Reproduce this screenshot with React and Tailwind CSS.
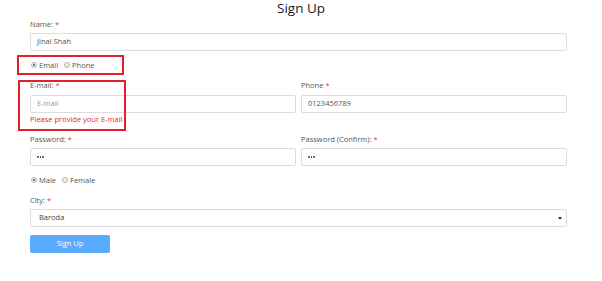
import React from 'react';

const font = { fontFamily: '"Open Sans", "Noto Sans", sans-serif' };

const Req = () => <span className="text-[#e53935] ml-[2px]">*</span>;

const Label = ({ children, required = true }) => (
  <div className="h-[10px] leading-[10px] text-[7.5px] text-[#555]">
    {children}
    {required && <Req />}
  </div>
);

const Input = ({ value, placeholder, className = '' }) => (
  <div
    className={`h-[18px] border border-[#dcdcdc] rounded-[2px] bg-white flex items-center px-[6px] text-[7.5px] ${className}`}
  >
    {value ? (
      <span className="text-[#555]">{value}</span>
    ) : (
      <span className="text-[#999]">{placeholder}</span>
    )}
  </div>
);

const Dots = () => (
  <div className="h-[18px] border border-[#dcdcdc] rounded-[2px] bg-white flex items-center px-[6px] gap-[1px]">
    <span className="w-[1.5px] h-[1.5px] rounded-full bg-[#444]" />
    <span className="w-[1.5px] h-[1.5px] rounded-full bg-[#444]" />
    <span className="w-[1.5px] h-[1.5px] rounded-full bg-[#444]" />
  </div>
);

const Radio = ({ label, checked }) => (
  <span className="flex items-center gap-[2px]">
    <span className="w-[6px] h-[6px] rounded-full border border-[#b5b5b5] bg-[#eee] flex items-center justify-center">
      {checked && <span className="w-[2.5px] h-[2.5px] rounded-full bg-[#555]" />}
    </span>
    <span>{label}</span>
  </span>
);

const App = () => {
  return (
    <div className="w-[602px] h-[281px] bg-white relative" style={font}>
      <h1 className="h-[16px] leading-[16px] text-[13.5px] font-medium text-center text-[#1a1a1a]">Sign Up</h1>

      <div className="pl-[30px] w-[567px]">
        {/* Name */}
        <div className="mt-[3px]">
          <Label>Name:</Label>
          <Input value="Jinal Shah" className="mt-[4px]" />
        </div>

        {/* Contact type */}
        <div className="mt-[9px] h-[10px] leading-[10px] flex items-center gap-[6px] text-[7.5px] text-[#555] pl-[1px]">
          <Radio label="Email" checked />
          <Radio label="Phone" />
        </div>

        {/* Email / Phone */}
        <div className="mt-[10px] grid grid-cols-2 gap-[5px]">
          <div>
            <Label>E-mail:</Label>
            <Input placeholder="E-mail" className="mt-[5px]" />
            <div className="mt-[1px] h-[10px] leading-[10px] text-[7.5px] text-[#e8262b]">
              Please provide your E-mail
            </div>
          </div>
          <div>
            <Label>Phone</Label>
            <Input value="0123456789" className="mt-[5px]" />
          </div>
        </div>

        {/* Passwords */}
        <div className="mt-[10px] grid grid-cols-2 gap-[5px]">
          <div>
            <Label>Password:</Label>
            <div className="mt-[4px]">
              <Dots />
            </div>
          </div>
          <div>
            <Label>Password (Confirm):</Label>
            <div className="mt-[4px]">
              <Dots />
            </div>
          </div>
        </div>

        {/* Gender */}
        <div className="mt-[9px] h-[10px] leading-[10px] flex items-center gap-[6px] text-[7.5px] text-[#555] pl-[1px]">
          <Radio label="Male" checked />
          <Radio label="Female" />
        </div>

        {/* City */}
        <div className="mt-[10px]">
          <Label>City:</Label>
          <div className="mt-[4px] h-[18px] border border-[#dcdcdc] rounded-[2px] bg-white flex items-center justify-between pl-[8px] pr-[4px] text-[7.5px] text-[#444]">
            <span>Baroda</span>
            <svg width="4" height="3" viewBox="0 0 4 3">
              <path d="M0 0 L4 0 L2 3 Z" fill="#333" />
            </svg>
          </div>
        </div>

        <button className="mt-[8px] w-[80px] h-[18px] rounded-[2px] bg-[#5aabff] text-white text-[7.5px] flex items-center justify-center">
          Sign Up
        </button>
      </div>

      {/* annotation boxes */}
      <div className="absolute left-[17px] top-[55px] w-[107px] h-[20px] border-2 border-[#e0202a]" />
      <div className="absolute left-[18px] top-[80px] w-[108px] h-[51px] border-2 border-[#e0202a]" />
    </div>
  );
};

export default App;
